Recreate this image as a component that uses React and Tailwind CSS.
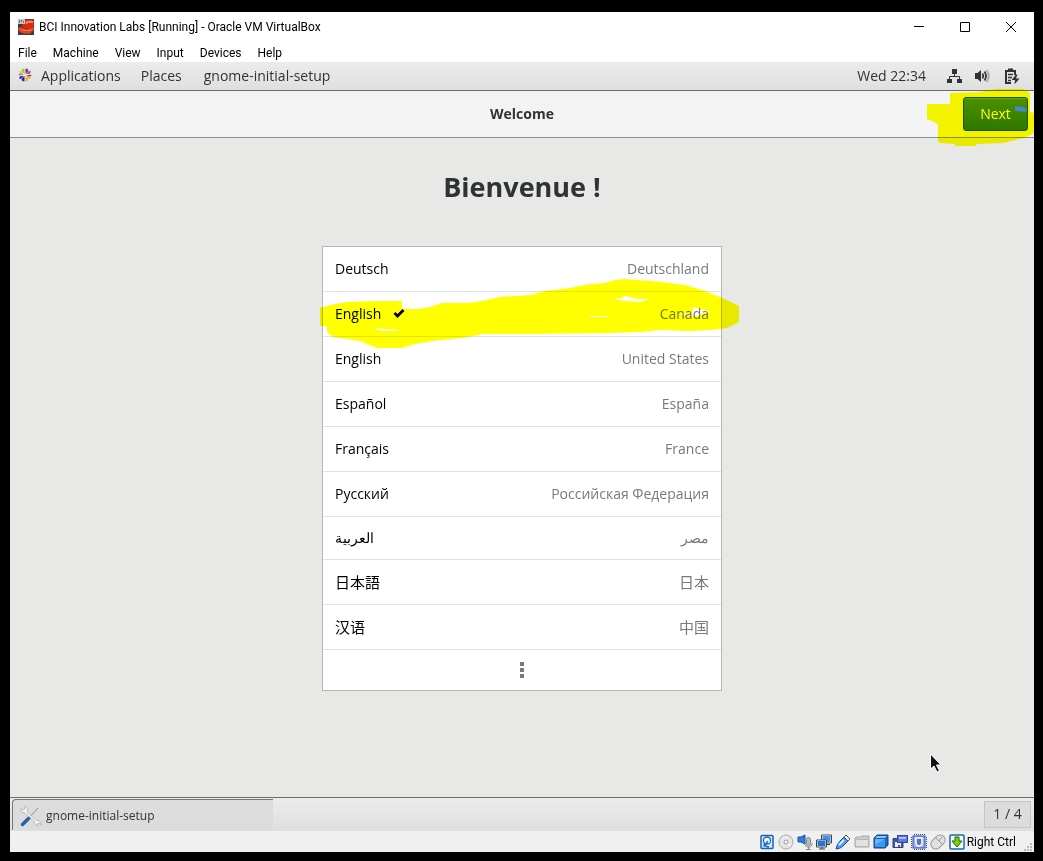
import React from "react";

const languages = [
  { name: "Deutsch", region: "Deutschland" },
  { name: "English", region: "Canada", selected: true },
  { name: "English", region: "United States" },
  { name: "Español", region: "España" },
  { name: "Français", region: "France" },
  { name: "Русский", region: "Российская Федерация" },
  { name: "العربية", region: "مصر", lang: "ar" },
  { name: "日本語", region: "日本", lang: "ja" },
  { name: "汉语", region: "中国", lang: "zh" },
];

function BoxLogo() {
  return (
    <svg className="size-4 shrink-0" viewBox="0 0 16 16" aria-hidden="true">
      <rect width="16" height="16" fill="#3a3c48" />
      <path d="M5 3 8 .500h7L16 2v5l-3 2H6L4 7z" fill="#d92c15" />
      <path d="M7 3q4-2 8-1v2q-4-1-7 1z" fill="#ff8a60" />
      <path d="M0 9q3-2 5 0 5 2 10-1l1 1v2l-4 3.500q-5 1-9-1L0 11z" fill="#e8401f" />
      <path d="M2 10q6 3 12 0l-2 2H5z" fill="#ff9468" />
      <rect width="7" height="5" fill="#c3c6cc" />
      <path d="M1 1h1v3H1zM3 1h1v2H3zM5 2h1v2H5z" fill="#6c7078" />
    </svg>
  );
}

function CentosLogo() {
  return (
    <svg className="size-[14px] shrink-0" viewBox="0 0 14 14" aria-hidden="true">
      <path d="M4.500.800h2v5L3.500 3z" fill="#9ccd2a" />
      <path d="M7.500.800h2L10.500 3 7.500 5.800z" fill="#932279" />
      <path d="M0 7l2.500-2 3 1.500-3 .8z" fill="#c55fae" />
      <path d="M1 3.500 3 3l3 3H3z" fill="#c2d94c" />
      <path d="M11 3l2 .5L11.500 6H8z" fill="#a14f8c" />
      <path d="M14 7l-2.500 2-3-1.500 3-.8z" fill="#5b4b9e" />
      <path d="M8 8h4l1 2.500-2 .5z" fill="#efa724" />
      <path d="M7.500 8.200 10.500 11l-1 2.200h-2z" fill="#f0b13c" />
      <path d="M6.500 8.200v5h-2L3.500 11z" fill="#262577" />
      <path d="M6 8H2l-1 2.500 2 .5z" fill="#3d3c94" />
    </svg>
  );
}

function SystemTray() {
  return (
    <div className="flex items-center gap-3 text-[#2e3436]">
      <svg className="h-4 w-[17px]" viewBox="0 0 17 16" aria-label="Network" role="img">
        <path d="M6 1h5v5H6zM1 11h5v4H1zM11 11h5v4h-5z" fill="currentColor" />
        <path d="M8.500 6v2.500M3.500 11V8.500h10V11" fill="none" stroke="currentColor" />
      </svg>
      <svg className="h-4 w-[17px]" viewBox="0 0 17 16" fill="none" stroke="currentColor" strokeWidth="1.800" aria-label="Volume" role="img">
        <path d="M0 5h2.500L6 2v12l-3.500-3H0z" fill="currentColor" stroke="none" />
        <path d="M7.500 5.500q1.500 2.500 0 5M9.500 3.500q3 4.500 0 9" />
        <path d="M11.500 2q4.500 6 0 12" opacity=".35" />
      </svg>
      <svg className="h-4 w-4" viewBox="0 0 16 16" fill="none" stroke="currentColor" strokeWidth="2" aria-label="Battery" role="img">
        <path d="M7 15H2V3h9v4M4 1.500h5" />
        <path d="M4 6.500h5M4 9.500h4M4 12.500h3" strokeWidth="1.500" />
        <path d="M12 6.500 7.500 12h3.500l-.5 4.500 5-6h-3.500l1.500-4z" fill="currentColor" stroke="none" />
      </svg>
    </div>
  );
}

function NextHighlight() {
  return (
    <svg className="pointer-events-none absolute -left-9 -top-2 h-[57px] w-[107px] mix-blend-multiply" viewBox="927 89 107 57" aria-hidden="true">
      <path
        fill="#ff0"
        fillRule="evenodd"
        d="M927 104H950V93L978 92 997 89H1022L1029 92 1030 94V112L1034 113V133L1027 137 1015 140 1003 143 977 144 975 146H955V144L940 143 938 141V124L932 121 927 119ZM1015 106 1023 107 1028 110V112L1015 111Z"
      />
    </svg>
  );
}

function RowHighlight() {
  return (
    <svg className="pointer-events-none absolute -left-[3px] -top-[13px] h-[69px] w-[419px] mix-blend-multiply" viewBox="320 279 419 69" aria-hidden="true">
      <path
        fill="#ff0"
        fillRule="evenodd"
        d="M320 308 335 304 347 302 375 301H402V309H418L430 307 442 303H468L482 301 500 297 530 295 545 291 570 288 590 284 605 283 615 280 625 279 638 280 662 282 685 285 702 290 720 297 733 303 739 306V322L727 328 710 330 690 331 660 330 640 332 610 333 530 334H483L462 338 433 341 415 344 402 348H377L360 341 333 337 327 332V326H320ZM374 328 385 329 398 330 399 331H385L377 330ZM589 316H607V317H589ZM614 299 622 298 624 296 630 297 638 299 650 299 640 302 625 301ZM680 313 692 314 693 307 700 309 708 311 712 312 705 313 697 316 682 315Z"
      />
    </svg>
  );
}

function LanguageRow({ item }) {
  const cjk = item.lang === "ja" || item.lang === "zh";
  return (
    <li className={`relative border-b border-[#e3e3e3] ${item.lang === "ar" ? "h-[43px]" : "h-[45px]"}`}>
      <button type="button" className={`flex h-full w-full items-center justify-between px-3 ${cjk ? "text-[15px]" : "pb-[2px]"}`}>
        <span className="flex items-center gap-3 text-black" lang={item.lang}>
          {item.name}
          {item.selected && (
            <svg className="h-[10px] w-3" viewBox="0 0 12 10" aria-label="Selected" role="img">
              <path d="M1.500 5 4.500 8 10.500 2" fill="none" stroke="#000" strokeWidth="2.800" />
            </svg>
          )}
        </span>
        <span className="text-[#77797a]" lang={item.lang}>{item.region}</span>
      </button>
      {item.selected && <RowHighlight />}
    </li>
  );
}

function StatusIcons() {
  const icon = "size-4";
  return (
    <div className="flex items-center gap-[3px]">
      <svg className={icon} viewBox="0 0 16 16"><rect x="2" y="1.500" width="12" height="13" rx="1" fill="#cfe6fb" stroke="#1767bd" strokeWidth="1.500" /><circle cx="8" cy="6.500" r="3.500" fill="#fff" stroke="#1767bd" strokeWidth="1.300" /><path d="M4.500 12.500 9 7M5 9q1 4 5 4" fill="none" stroke="#1767bd" strokeWidth="1.300" /></svg>
      <svg className={icon} viewBox="0 0 16 16"><circle cx="8" cy="8" r="7" fill="#e6e6e6" stroke="#aaa" /><circle cx="8" cy="8" r="2" fill="#fff" stroke="#999" /><path d="M8 5V2M10 10l3 2" stroke="#fff" /></svg>
      <svg className={icon} viewBox="0 0 16 16"><path d="M1 3h3l4-2v9L4 8H1z" fill="#2f83d6" stroke="#17529a" /><rect x="9.500" y="3.500" width="4" height="8" rx="2" fill="#bbb" stroke="#888" /><path d="M8 9v2l2 2h3l2-2V9M11.500 13v2M9 15.500h5" fill="none" stroke="#888" /></svg>
      <svg className={icon} viewBox="0 0 16 16"><rect x="6" y="1.500" width="9" height="7" fill="#3f94eb" stroke="#fff" /><path d="M5.500 1h10v8h-10zM9 10.500h5" fill="none" stroke="#444" /><rect x="1" y="6.500" width="9" height="6" fill="#2376d8" stroke="#fff" /><path d="M.500 6h10v7H.500zM3 15h6M6 13v2" fill="none" stroke="#444" /></svg>
      <svg className={icon} viewBox="0 0 16 16"><path d="M1 15q1-5 4-8l4-4 4 4-5 5q-3 3-7 3z" fill="#4a9cee" stroke="#1b5496" /><path d="M9 3l2-2 4 4-2 2z" fill="#eee" stroke="#555" /><path d="M4 11l5-5" stroke="#d9edff" strokeWidth="2" /></svg>
      <svg className={icon} viewBox="0 0 16 16"><path d="M1 13V4l2-1h4l1-1h7v11z" fill="#ccc" stroke="#aaa" /><path d="M1.500 5.500h13v7h-13z" fill="#e2e2e2" stroke="#b6b6b6" /></svg>
      <svg className={icon} viewBox="0 0 16 16"><path d="M1 4l3-3h11v10l-3 3H1z" fill="#1764c5" stroke="#174584" /><path d="M2 4l2-2h10l-2 2z" fill="#80c6ff" /><path d="M2 5h10v8H2z" fill="#3f96ef" /><path d="M2 5h10L2 11z" fill="#68b1fb" /></svg>
      <svg className={icon} viewBox="0 0 16 16"><path d="M1 4.500h10v9H1z" fill="#3658bb" stroke="#353f72" /><path d="M3 8h6v5H3z" fill="#eef" /><path d="M6 11h2v2H6z" fill="#3658bb" /><rect x="5.500" y="1.500" width="10" height="7" fill="#5d79dc" stroke="#3342a1" /><path d="M7 3h7v2H7z" fill="#aebfff" /></svg>
      <svg className={icon} viewBox="0 0 16 16"><rect x="2" y="2" width="12" height="12" fill="#9fb1f0" stroke="#3248ab" /><path d="M3 .500h11M3 15.500h11M.500 3v11M15.500 3v11" stroke="#3248ab" strokeDasharray="1 1" /><path d="M5 4v4q0 4 3 4t3-4V4z" fill="#5870cc" stroke="#fff" strokeWidth="1.500" /></svg>
      <svg className={icon} viewBox="0 0 16 16"><rect x="3" y="0" width="10" height="16" rx="5" transform="rotate(45 8 8)" fill="#e2e2e2" stroke="#999" /><path d="M6 4l6 6M9 7l3-4" stroke="#999" /></svg>
      <svg className={icon} viewBox="0 0 16 16"><rect x="1" y="1" width="14" height="14" rx="1" fill="#f5fbff" stroke="#176bad" strokeWidth="1.500" /><path d="M6 3h4v4h3l-5 6-5-6h3z" fill="#73d40a" stroke="#315f09" /></svg>
    </div>
  );
}

function TitleBar() {
  return (
    <header className="bg-white font-[Roboto,'Open_Sans',sans-serif] text-[12px] text-black">
      <div className="flex h-[30px] items-center pl-2">
        <BoxLogo />
        <h1 className="ml-[5px] flex-1">BCI Innovation Labs [Running] - Oracle VM VirtualBox</h1>
        <div className="flex">
          <button type="button" aria-label="Minimize" className="grid h-7 w-[46px] place-items-center">
            <svg className="size-[11px]" viewBox="0 0 11 11"><path d="M0 4.500h10" stroke="#000" /></svg>
          </button>
          <button type="button" aria-label="Maximize" className="grid h-7 w-[46px] place-items-center">
            <svg className="size-[11px]" viewBox="0 0 11 11"><path d="M.500.500h9v9h-9z" fill="none" stroke="#000" /></svg>
          </button>
          <button type="button" aria-label="Close" className="grid h-7 w-[46px] place-items-center">
            <svg className="size-[11px]" viewBox="0 0 11 11"><path d="M0 0l10 10M10 0 0 10" stroke="#000" /></svg>
          </button>
        </div>
      </div>
      <nav className="flex h-5 items-center gap-4 pl-2 pt-px">
        {["File", "Machine", "View", "Input", "Devices", "Help"].map((label) => (
          <button key={label} type="button">{label}</button>
        ))}
      </nav>
    </header>
  );
}

export default function App() {
  return (
    <div className="min-h-screen bg-black pb-[9px] pl-[10px] pr-[9px] pt-3 font-['Open_Sans','Noto_Sans','Noto_Sans_CJK_JP',sans-serif] text-[14px]">
      <div className="relative flex min-h-[calc(100vh-21px)] flex-col">
        <TitleBar />
        <div className="flex h-[29px] items-center justify-between border-b border-[#6b6e68] bg-linear-to-b from-[#ececec] to-[#dfdfdf] pl-2 pr-[14px] text-[#2e3436]">
          <nav className="flex items-center gap-5 pb-[2px]">
            <button type="button" className="flex items-center gap-[9px]"><CentosLogo />Applications</button>
            <button type="button">Places</button>
            <button type="button" className="pl-[2px]">gnome-initial-setup</button>
          </nav>
          <div className="flex items-center gap-5">
            <time className="pb-[2px]">Wed 22:34</time>
            <SystemTray />
          </div>
        </div>
        <div className="grid h-[47px] grid-cols-3 items-center border-b border-[#8b8e86] bg-[#f3f3f3] px-[6px]">
          <h2 className="col-start-2 pb-[2px] text-center font-bold text-[#2e3436]">Welcome</h2>
          <div className="relative justify-self-end">
            <button type="button" className="h-[34px] w-[65px] rounded-[3px] border border-[#1c5187] bg-linear-to-b from-[#4a90d9] to-[#2f78bf] pb-[2px] text-white shadow-[inset_0_1px_#6ba8e4]">Next</button>
            <NextHighlight />
          </div>
        </div>
        <main className="flex flex-1 flex-col items-center bg-[#e8e8e7]">
          <h1 className="pt-7 text-[27px] font-bold leading-[42px] text-[#2e3436]">Bienvenue !</h1>
          <ul className="mt-[38px] w-[400px] border border-[#b6b6b3] bg-white">
            {languages.map((item) => <LanguageRow key={item.name + item.region} item={item} />)}
            <li>
              <button type="button" aria-label="More languages" className="grid h-10 w-full place-items-center">
                <svg className="h-4 w-1" viewBox="0 0 4 16" fill="#77797a"><path d="M0 0h4v4H0zM0 6h4v4H0zM0 12h4v4H0z" /></svg>
              </button>
            </li>
          </ul>
        </main>
        <footer>
          <div className="flex h-[34px] items-center justify-between border-t border-[#6b6e68] bg-linear-to-b from-[#ececec] to-[#dfdfdf] pl-[2px] pr-[3px] text-[#2e3436]">
            <button type="button" className="flex h-[31px] w-[261px] items-center gap-1 rounded-tl-sm border-l border-t border-[#777] bg-[#dcdcdc] pl-[7px] pt-[2px] text-[12px]">
              <svg className="size-[22px]" viewBox="0 0 22 22" aria-hidden="true">
                <path d="M18 3 9 13" stroke="#888" />
                <path d="M2.500 19.500 9 13" stroke="#2861a8" strokeWidth="3.500" strokeLinecap="round" />
                <path d="M1 3l2 2 2-1V1l3 3-1 3 9 8 4 1 1 4-2-2-2 1 1 2-3-2-1-3-9-8-4-1z" fill="#f4f4f4" stroke="#aaa" strokeWidth=".7" />
              </svg>
              gnome-initial-setup
            </button>
            <div className="grid h-[27px] w-[47px] place-items-center border border-[#c4c4c4] bg-[#dcdcdc] pb-[2px]">1 / 4</div>
          </div>
          <div className="flex h-[21px] items-center justify-end gap-[2px] bg-[#f0f0f0] font-[Roboto,'Open_Sans',sans-serif] text-[12px] text-black">
            <StatusIcons />
            <span>Right Ctrl</span>
            <svg className="ml-[6px] mr-px size-[9px] self-end" viewBox="0 0 9 9" fill="#bbb" aria-hidden="true"><path d="M6 0h2v2H6zM3 3h2v2H3zM6 3h2v2H6zM0 6h2v2H0zM3 6h2v2H3zM6 6h2v2H6z" /></svg>
          </div>
        </footer>
        <svg className="pointer-events-none absolute bottom-[79px] right-[92px] h-5 w-3" viewBox="0 0 12 20" aria-hidden="true">
          <path d="M.500 1v15l3.500-3 3 6 2.500-1-3-6H11z" fill="#111" stroke="#fff" />
        </svg>
      </div>
    </div>
  );
}
